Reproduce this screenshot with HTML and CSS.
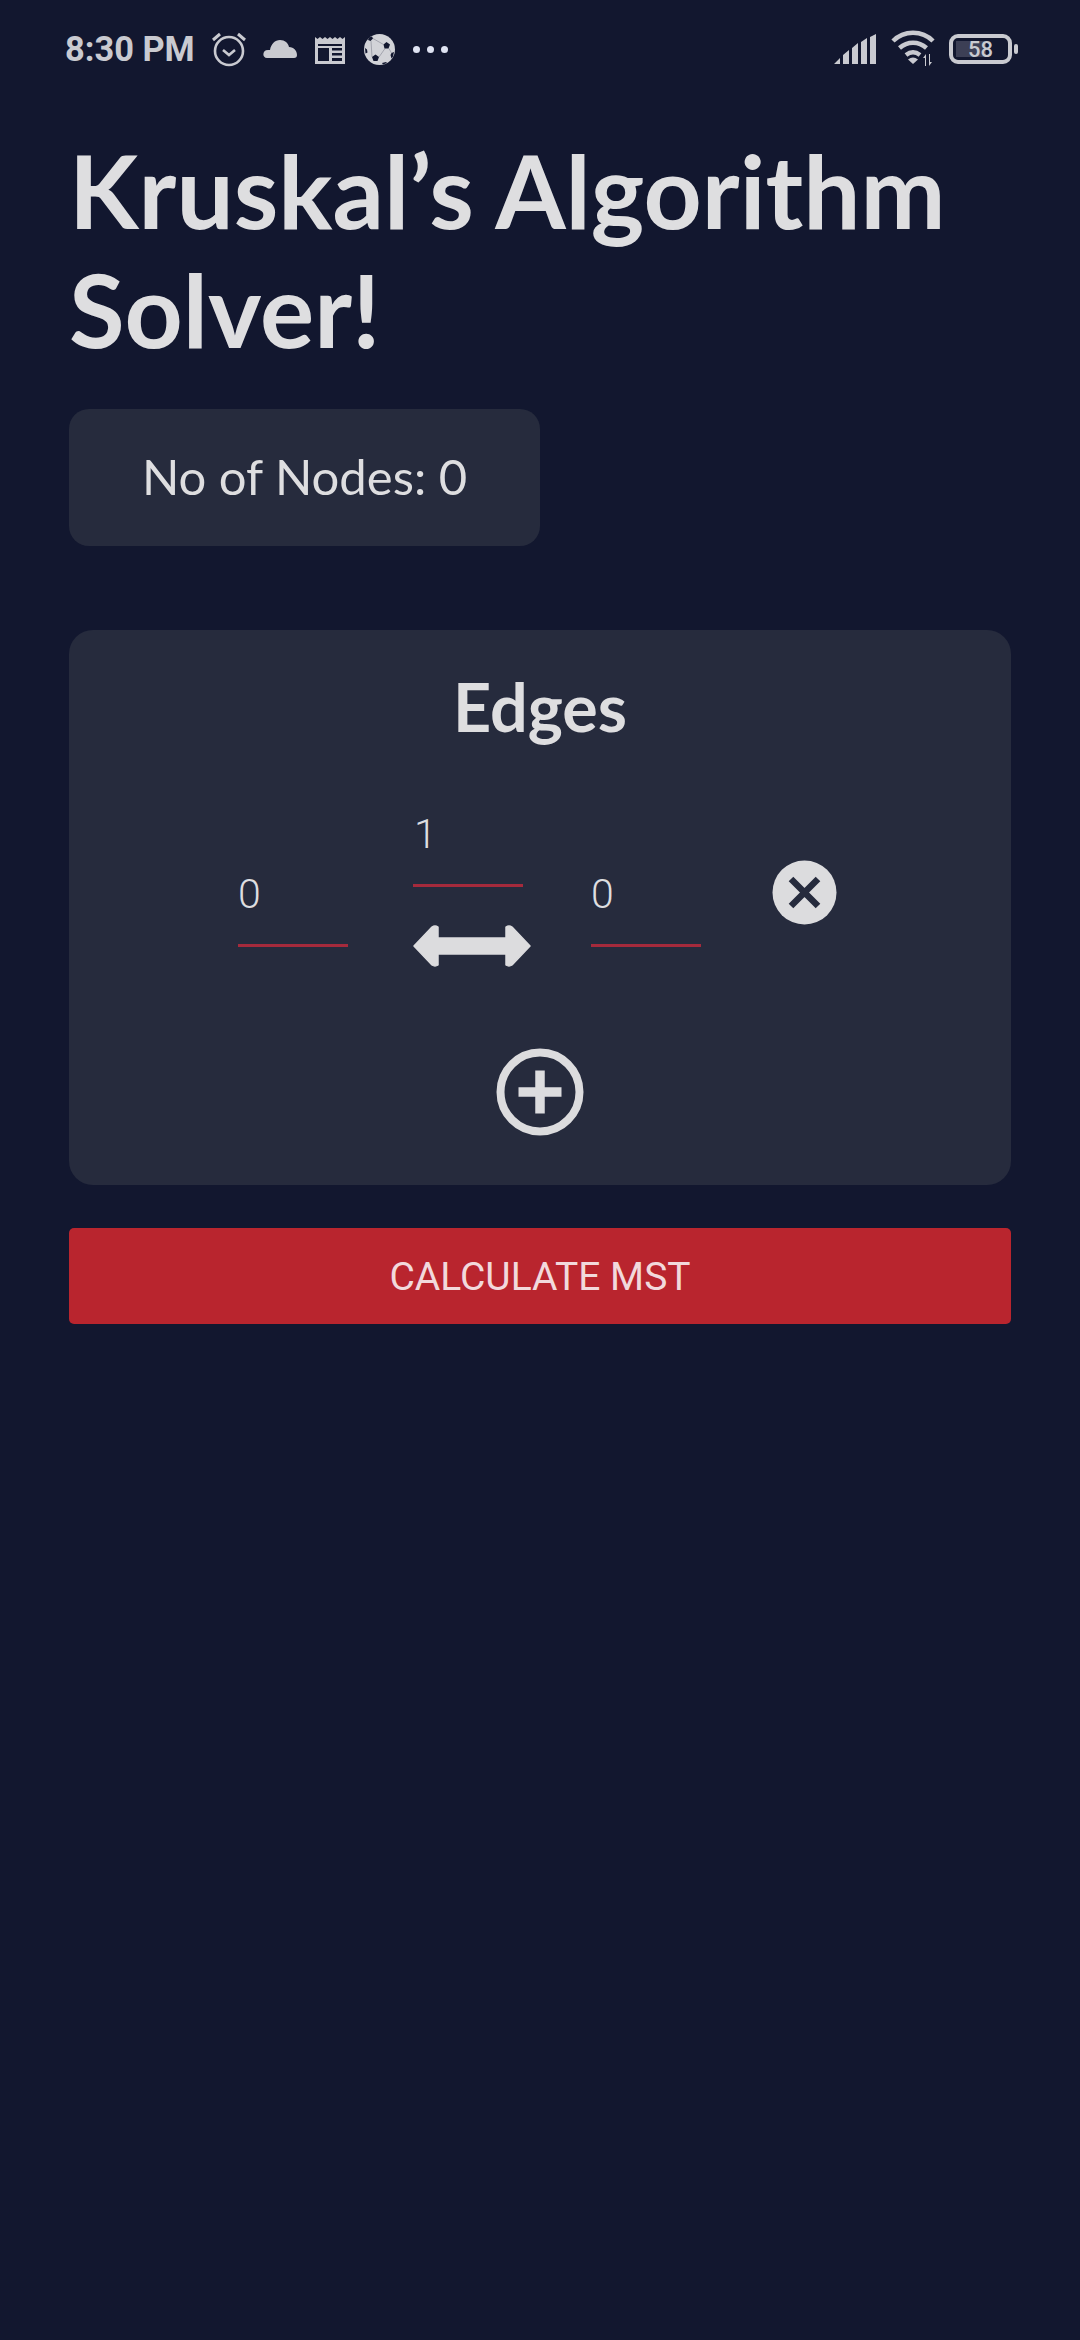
FILE: index.html
```html
<html>
<head>
	<meta charset="utf-8">
	<link rel="stylesheet" href="styles.css">
	<title>Kruskal's Algorithm Solver</title>
</head>
<body>
	<div class="statusbar">
		<span class="time">8:30 PM</span>
		<svg class="ic-alarm" width="36" height="36" viewBox="0 0 36 36">
			<circle cx="18" cy="20" r="14" fill="none" stroke="#c9cad0" stroke-width="2.6"/>
			<path d="M12 19l6 5 6-5" fill="none" stroke="#c9cad0" stroke-width="2.6"/>
			<path d="M2 9l7-6M34 9l-7-6" fill="none" stroke="#c9cad0" stroke-width="3"/>
		</svg>
		<svg class="ic-cloud" width="34" height="20" viewBox="0 0 34 20">
			<path d="M4 19c-5 0-5-8 1-8 1 0 2 0 2 0C8 5 12 1 17 1c5 0 8 3 9 7 5 0 8 4 8 8 0 2-1 3-3 3z" fill="#c9cad0"/>
		</svg>
		<svg class="ic-news" width="30" height="29" viewBox="0 0 30 29">
			<path d="M0 2l2.500 2L5 2l2.500 2L10 2l2.500 2L15 2l2.500 2L20 2l2.500 2L25 2l2.500 2L30 2v27H0z" fill="#c9cad0"/>
			<path d="M3 9h24v2H3zM3 13h11v13H3zM17 13h10v2.500H17zM17 18h10v2.500H17zM17 23h10v3H17z" fill="#12172f"/>
		</svg>
		<svg class="ic-ball" width="31" height="31" viewBox="0 0 31 31">
			<circle cx="15.500" cy="15.500" r="15.500" fill="#d2d3d8"/>
			<path d="M22.500 8l3.500 2.500-1.500 4h-4L19.500 10.500zM11.500 20.500l3.500 2.500-1.500 4h-4L8 23zM5 3.500L8 2.500l1 2L6.500 7 4 6zM1 14l2 1.500.5 3-2 1zM27.500 19l2.500-1-1 4.500-1.500 2-1-3.500zM18 29l4-1 1 1-4 1.500z" fill="#12172f"/>
			<path d="M9 4.500l10.500 6M7 7l1 16M15 23l6-8.500M25 14.500l2.500 4.500" stroke="#12172f" stroke-width="0.5" fill="none" opacity="0.5"/>
		</svg>
		<div class="dots"><i></i><i></i><i></i></div>
		<div class="status-right">
			<svg class="ic-signal" width="42" height="30" viewBox="0 0 42 30">
				<path d="M0 30l6-6v6zM9 30v-9l6-5v14zM18 30V14l6-5v21zM27 30V8l6-4v26zM36 30V3l6-3v30z" fill="#c9cad0"/>
			</svg>
			<svg class="ic-wifi" width="46" height="38" viewBox="0 0 46 38">
				<path d="M2 11c11-11 29-11 40 0M8.500 18c8-7 19-7 27 0M15 25c4.500-3.500 9.500-3.500 14 0" fill="none" stroke="#c9cad0" stroke-width="4.500"/>
				<path d="M17 29.500a8 8 0 0 1 10 0L22 34z" fill="#c9cad0"/>
				<path d="M34 36v-8h-2l3-4v12zM38 24v12l3-4h-2v-8z" fill="#c9cad0"/>
			</svg>
			<div class="battery">
				<div class="battery-level"></div>
				<span class="battery-num">58</span>
			</div>
			<div class="battery-nub"></div>
		</div>
	</div>

	<h1 class="title">Kruskal’s Algorithm Solver!</h1>

	<div class="nodes-card">No of Nodes: 0</div>

	<div class="edges-card">
		<h2 class="edges-title">Edges</h2>
		<div class="edge-row">
			<div class="field side">0</div>
			<div class="middle">
				<div class="field field-mid">1</div>
				<svg class="arrow" width="118" height="42" viewBox="0 0 118 42">
					<path d="M1 21L19 2q3-2 6 0V13H93V2q3-2 6 0l18 19-18 19q-3 2-6 0V29H25v11q-3 2-6 0z" fill="#dcdcde" stroke="#dcdcde" stroke-width="1.500" stroke-linejoin="round"/>
				</svg>
			</div>
			<div class="field side">0</div>
			<svg class="close" width="65" height="65" viewBox="0 0 65 65">
				<circle cx="32.500" cy="32.500" r="32" fill="#dcdcde"/>
				<path d="M19 19l27 27M46 19L19 46" stroke="#262b3d" stroke-width="6.500" fill="none"/>
			</svg>
		</div>
		<svg class="add" width="88" height="88" viewBox="0 0 88 88">
			<circle cx="44" cy="44" r="39.500" fill="none" stroke="#dcdcde" stroke-width="8"/>
			<path d="M44 22.500v43M22.500 44h43" stroke="#dcdcde" stroke-width="9.500" fill="none"/>
		</svg>
	</div>

	<div class="calc-btn">CALCULATE MST</div>
</body>
</html>
```
FILE: styles.css
```css
body {
	margin: 0;
	height: 2340px;
	background-color: #12172f;
	color: #dedee0;
	font-family: "Lato", sans-serif;
}
.statusbar {
	display: flex;
	align-items: center;
	height: 98px;
	padding: 0 62px 0 65px;
	color: #c9cad0;
}
.time {
	font-family: "Roboto", sans-serif;
	font-weight: 700;
	font-size: 34.400px;
	margin-right: 16px;
}
.ic-cloud {
	margin-left: 16px;
}
.ic-news {
	margin-left: 18px;
}
.ic-ball {
	margin-left: 19px;
}
.dots {
	display: flex;
	gap: 7px;
	margin-left: 18px;
}
.dots i {
	width: 7px;
	height: 7px;
	border-radius: 50%;
	background-color: #dfe3f2;
}
.status-right {
	display: flex;
	align-items: center;
	margin-left: auto;
}
.ic-wifi {
	margin-left: 15px;
}
.battery {
	position: relative;
	width: 63px;
	height: 30px;
	margin-left: 12px;
	border: 4px solid #c9cad0;
	border-radius: 9px;
	box-sizing: border-box;
	display: flex;
	align-items: center;
	justify-content: center;
}
.battery-level {
	position: absolute;
	left: 3px;
	top: 3px;
	bottom: 3px;
	width: 30px;
	background-color: #3c3f55;
}
.battery-num {
	position: relative;
	font-family: "Roboto", sans-serif;
	font-weight: 500;
	font-size: 22px;
}
.battery-nub {
	width: 4px;
	height: 10px;
	margin-left: 2px;
	border-radius: 2px;
	background-color: #c9cad0;
}
.title {
	margin: 0 69px;
	padding-top: 33px;
	font-size: 101.500px;
	line-height: 119px;
	font-weight: 700;
}
.nodes-card {
	width: 471px;
	height: 137px;
	margin: 40px 0 0 69px;
	border-radius: 20px;
	background-color: #262b3d;
	font-size: 49px;
	line-height: 135px;
	text-align: center;
}
.edges-card {
	display: flex;
	flex-direction: column;
	align-items: center;
	height: 555px;
	margin: 84px 69px 0;
	border-radius: 24px;
	background-color: #262b3d;
}
.edges-title {
	margin: 39px 0 0;
	font-size: 66.500px;
	line-height: 74px;
	font-weight: 700;
}
.edge-row {
	display: flex;
	align-self: flex-start;
	align-items: flex-start;
	margin: 66px 0 0 169px;
}
.field {
	width: 110px;
	height: 75px;
	border-bottom: 3px solid #a52a3c;
	font-family: "Roboto", sans-serif;
	font-weight: 300;
	font-size: 41px;
	line-height: 50px;
}
.field-mid {
	text-indent: 1px;
}
.side {
	margin-top: 60px;
}
.middle {
	display: flex;
	flex-direction: column;
	margin: 0 60px 0 65px;
}
.arrow {
	margin-top: 38px;
}
.close {
	margin: 51px 0 0 71px;
}
.add {
	margin-top: 81px;
}
.calc-btn {
	height: 96px;
	margin: 43px 69px 0;
	border-radius: 5px;
	background-color: #b9252e;
	color: #f2d9dc;
	font-family: "Roboto", sans-serif;
	font-size: 39px;
	line-height: 98px;
	text-align: center;
}
```
